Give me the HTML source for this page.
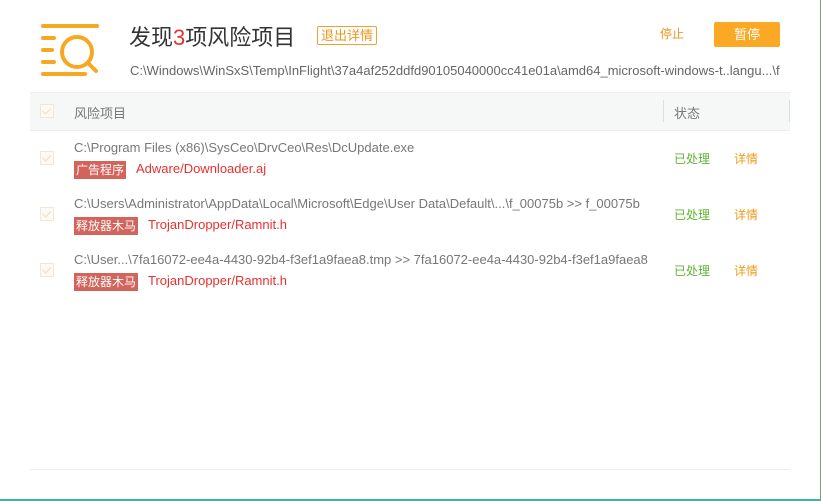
<!DOCTYPE html>
<html><head><meta charset="utf-8"><style>
body{margin:0;width:821px;height:501px;background:#fff;position:relative;overflow:hidden;font-family:"Liberation Sans","Noto Sans CJK SC",sans-serif}
.a{position:absolute;white-space:nowrap}
.cb{position:absolute;left:40px;width:12px;height:12px;border:1px solid #f3e6d2;background:#fdfaf5}
.cb:after{content:"";position:absolute;left:3px;top:1px;width:4px;height:7px;border:solid #f0dcc0;border-width:0 1.5px 1.5px 0;transform:rotate(45deg)}
.path{font-size:13px;color:#777;left:74px}
.tag{left:74px;background:#d2645c;color:#fff;font-size:12px;padding:0 2px;height:18px;line-height:18px}
.vir{font-size:13px;color:#e5322d}
.ok{left:674px;font-size:12px;color:#5fb532}
.dt{left:734px;font-size:12px;color:#f09a1b}
</style></head><body>
<svg class="a" style="left:40px;top:24px" width="62" height="52" viewBox="0 0 62 52">
<g stroke="#f7a823" stroke-width="4" stroke-linecap="round" fill="none">
<line x1="3" y1="2" x2="57" y2="2"/><line x1="3" y1="14" x2="14" y2="14"/><line x1="3" y1="26" x2="12" y2="26"/><line x1="3" y1="38" x2="14" y2="38"/><line x1="3" y1="50" x2="45" y2="50"/>
<circle cx="37" cy="28" r="15"/><line x1="49" y1="40" x2="56" y2="47"/></g></svg>
<div class="a" style="left:129px;top:20px;font-size:22px;color:#333">发现<span style="color:#e5322d">3</span>项风险项目</div>
<div class="a" style="left:317px;top:26px;border:1px solid #f0a030;color:#f0951b;font-size:13px;padding:0 3px;height:17px;line-height:17px;border-radius:2px">退出详情</div>
<div class="a" style="left:660px;top:25px;font-size:12px;color:#f0951b">停止</div>
<div class="a" style="left:714px;top:22px;width:66px;height:25px;background:#fba825;border-radius:2px;color:#fff;font-size:13px;text-align:center;line-height:25px">暂停</div>
<div class="a" style="left:130px;top:63px;font-size:13px;color:#666">C:\Windows\WinSxS\Temp\InFlight\37a4af252ddfd90105040000cc41e01a\amd64_microsoft-windows-t..langu...\f</div>
<div class="a" style="left:30px;top:92px;width:760px;height:37px;background:#f6f7f7;border-top:1px solid #eee;border-bottom:1px solid #eee"></div>
<div class="a" style="left:663px;top:100px;width:1px;height:22px;background:#ddd"></div>
<div class="a" style="left:789px;top:100px;width:1px;height:22px;background:#ddd"></div>
<div class="cb" style="top:104px"></div>
<div class="a" style="left:74px;top:103px;font-size:13px;color:#777">风险项目</div>
<div class="a" style="left:674px;top:103px;font-size:13px;color:#777">状态</div>

<div class="cb" style="top:151px"></div>
<div class="a path" style="top:140px">C:\Program Files (x86)\SysCeo\DrvCeo\Res\DcUpdate.exe</div>
<div class="a tag" style="top:161px">广告程序</div>
<div class="a vir" style="left:136px;top:161px">Adware/Downloader.aj</div>
<div class="a ok" style="top:150px">已处理</div><div class="a dt" style="top:150px">详情</div>

<div class="cb" style="top:207px"></div>
<div class="a path" style="top:196px">C:\Users\Administrator\AppData\Local\Microsoft\Edge\User Data\Default\...\f_00075b &gt;&gt; f_00075b</div>
<div class="a tag" style="top:217px">释放器木马</div>
<div class="a vir" style="left:148px;top:217px">TrojanDropper/Ramnit.h</div>
<div class="a ok" style="top:206px">已处理</div><div class="a dt" style="top:206px">详情</div>

<div class="cb" style="top:263px"></div>
<div class="a path" style="top:252px">C:\User...\7fa16072-ee4a-4430-92b4-f3ef1a9faea8.tmp &gt;&gt; 7fa16072-ee4a-4430-92b4-f3ef1a9faea8</div>
<div class="a tag" style="top:273px">释放器木马</div>
<div class="a vir" style="left:148px;top:273px">TrojanDropper/Ramnit.h</div>
<div class="a ok" style="top:262px">已处理</div><div class="a dt" style="top:262px">详情</div>

<div class="a" style="left:30px;top:469px;width:760px;height:1px;background:#eee"></div>
<div class="a" style="left:0;top:499px;width:821px;height:2px;background:#35b9a5"></div>
<div class="a" style="left:820px;top:0;width:1px;height:501px;background:#8a9a80"></div>
</body></html>
